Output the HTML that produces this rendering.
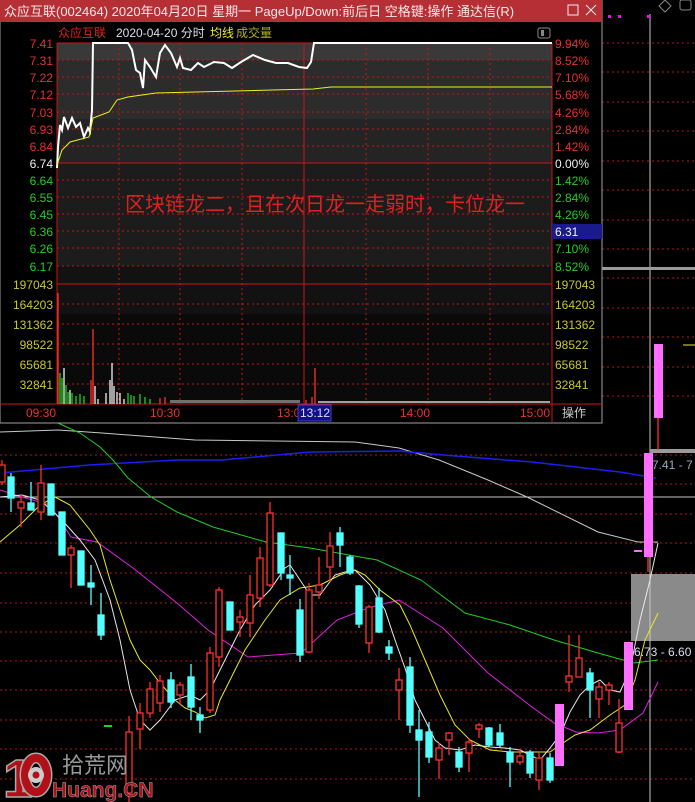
<!DOCTYPE html>
<html><head><meta charset="utf-8"><style>
html,body{margin:0;padding:0;background:#000;width:695px;height:802px;overflow:hidden}
svg{display:block}
text{font-family:"Liberation Sans","Noto Sans CJK SC",sans-serif}
</style></head><body>
<svg width="695" height="802" viewBox="0 0 695 802" xmlns="http://www.w3.org/2000/svg">
<rect width="695" height="802" fill="#000"/>
<g stroke="#b01818" stroke-width="1" stroke-dasharray="2,3">
<line x1="0" x2="695" y1="484" y2="484"/><line x1="0" x2="695" y1="514" y2="514"/><line x1="0" x2="695" y1="543" y2="543"/><line x1="0" x2="695" y1="573" y2="573"/><line x1="0" x2="695" y1="603" y2="603"/><line x1="0" x2="695" y1="632" y2="632"/><line x1="0" x2="695" y1="661" y2="661"/><line x1="0" x2="695" y1="690" y2="690"/><line x1="0" x2="695" y1="720" y2="720"/><line x1="0" x2="695" y1="749" y2="749"/><line x1="0" x2="695" y1="779" y2="779"/><line x1="0" x2="695" y1="455" y2="455"/>
<line x1="602" x2="695" y1="43" y2="43"/><line x1="602" x2="695" y1="72" y2="72"/><line x1="602" x2="695" y1="102" y2="102"/><line x1="602" x2="695" y1="131" y2="131"/><line x1="602" x2="695" y1="161" y2="161"/><line x1="602" x2="695" y1="190" y2="190"/><line x1="602" x2="695" y1="220" y2="220"/><line x1="602" x2="695" y1="249" y2="249"/><line x1="602" x2="695" y1="278" y2="278"/><line x1="602" x2="695" y1="308" y2="308"/><line x1="602" x2="695" y1="337" y2="337"/><line x1="602" x2="695" y1="367" y2="367"/><line x1="602" x2="695" y1="396" y2="396"/>
</g>
<line x1="0" x2="695" y1="497" y2="497" stroke="#c8c8c8"/>
<rect x="631" y="574" width="64" height="67" fill="#8a8a8a"/>
<line x1="650" x2="650" y1="14" y2="802" stroke="#c8c8c8"/>
<rect x="602" y="267" width="93" height="3" fill="#9a9a9a"/>
<rect x="650" y="449" width="45" height="4" fill="#9a9a9a"/>
<polyline fill="none" stroke="#c8c8c8" points="0,432 58,430 102,433 195,440 355,442 399,448 439,460 488,480 527,497 598,532 638,542 658,542"/>
<polyline fill="none" stroke="#1e1ef0" stroke-width="1.5" points="0,473 89,465 177,460 222,460 310,452 399,451 443,455 532,462 620,472 656,478"/>
<polyline fill="none" stroke="#20d020" points="58,423 80,433 100,447 113,460 128,478 151,497 177,512 213,527 266,542 310,548 377,560 421,580 465,613 510,625 554,640 598,653 634,663 658,660"/>
<polyline fill="none" stroke="#e020e0" points="0,490 22,497 50,505 71,537 97,542 133,568 177,603 208,630 248,657 301,653 337,620 368,608 399,600 443,628 488,673 532,707 554,723 576,732 598,733 620,730 643,713 658,682"/>
<polyline fill="none" stroke="#e8e820" points="0,542 20,525 40,505 55,497 70,505 90,530 100,545 110,580 120,610 130,640 140,660 150,670 160,683 175,700 185,708 195,712 205,718 215,715 220,700 230,680 245,650 265,620 280,600 300,588 320,585 340,575 355,570 365,575 380,590 400,605 410,625 425,660 440,695 455,725 470,740 490,750 510,752 535,752 550,752 560,745 575,735 590,730 610,715 625,705 635,680 645,640 658,613"/>
<polyline fill="none" stroke="#e8e8e8" points="0,497 22,495 40,500 60,518 80,540 95,560 110,600 120,640 130,690 140,720 150,730 160,720 175,700 190,695 200,700 210,690 220,670 230,650 240,630 255,605 270,590 285,568 290,565 300,580 310,595 320,595 335,575 345,572 355,570 370,585 385,610 395,640 405,668 415,700 425,720 435,740 445,748 460,750 475,745 490,747 505,748 520,750 530,755 540,760 550,748 560,735 570,712 580,695 590,685 600,680 610,690 620,692 630,670 640,620 650,580 658,543"/>
<g stroke-width="1.3">
<g stroke="#ff3030" fill="#000">
<line x1="2" x2="2" y1="460" y2="485"/><rect x="-1" y="465" width="6" height="17"/>
<line x1="21" x2="21" y1="495" y2="527"/><rect x="18" y="502" width="6" height="6"/>
<line x1="41" x2="41" y1="465" y2="520"/><rect x="38" y="483" width="6" height="29"/>
<line x1="71" x2="71" y1="545" y2="588"/><rect x="68" y="548" width="6" height="7"/>
<line x1="129" x2="129" y1="716" y2="802"/><rect x="126" y="732" width="6" height="61"/>
<line x1="140" x2="140" y1="703" y2="749"/><rect x="137" y="713" width="6" height="16"/>
<line x1="150" x2="150" y1="682" y2="718"/><rect x="147" y="689" width="6" height="24"/>
<line x1="160" x2="160" y1="675" y2="712"/><rect x="157" y="681" width="6" height="22"/>
<line x1="180" x2="180" y1="682" y2="705"/><rect x="177" y="685" width="6" height="10"/>
<line x1="210" x2="210" y1="647" y2="713"/><rect x="207" y="653" width="6" height="57"/>
<line x1="219" x2="219" y1="587" y2="667"/><rect x="216" y="590" width="6" height="67"/>
<line x1="240" x2="240" y1="610" y2="637"/><rect x="237" y="617" width="6" height="5"/>
<line x1="250" x2="250" y1="575" y2="637"/><rect x="247" y="595" width="6" height="28"/>
<line x1="260" x2="260" y1="547" y2="607"/><rect x="257" y="558" width="6" height="40"/>
<line x1="270" x2="270" y1="502" y2="587"/><rect x="267" y="513" width="6" height="72"/>
<line x1="309" x2="309" y1="583" y2="653"/><rect x="306" y="590" width="6" height="62"/>
<line x1="319" x2="319" y1="557" y2="599"/><rect x="316" y="585" width="6" height="7"/>
<line x1="330" x2="330" y1="532" y2="582"/><rect x="327" y="546" width="6" height="21"/>
<line x1="369" x2="369" y1="605" y2="653"/><rect x="366" y="607" width="6" height="36"/>
<line x1="399" x2="399" y1="668" y2="720"/><rect x="396" y="680" width="6" height="10"/>
<line x1="439" x2="439" y1="743" y2="779"/><rect x="436" y="748" width="6" height="12"/>
<line x1="449" x2="449" y1="732" y2="755"/><rect x="446" y="733" width="6" height="7"/>
<line x1="469" x2="469" y1="738" y2="772"/><rect x="466" y="742" width="6" height="11"/>
<line x1="479" x2="479" y1="723" y2="738"/><rect x="476" y="725" width="6" height="4"/>
<line x1="520" x2="520" y1="749" y2="765"/><rect x="517" y="756" width="6" height="6"/>
<line x1="539" x2="539" y1="753" y2="790"/><rect x="536" y="758" width="6" height="22"/>
<line x1="569" x2="569" y1="635" y2="692"/><rect x="566" y="676" width="6" height="6"/>
<line x1="579" x2="579" y1="635" y2="677"/><rect x="576" y="658" width="6" height="19"/>
<line x1="599" x2="599" y1="682" y2="718"/><rect x="596" y="687" width="6" height="12"/>
<line x1="609" x2="609" y1="682" y2="705"/><rect x="606" y="685" width="6" height="5"/>
<line x1="619" x2="619" y1="699" y2="753"/><rect x="616" y="723" width="6" height="29"/>
<line x1="658" x2="658" y1="418" y2="450"/>
<line x1="648" x2="648" y1="557" y2="572"/>
</g>
<g stroke="#54ffff" fill="#54ffff">
<line x1="11" x2="11" y1="473" y2="512"/><rect x="8" y="477" width="6" height="21"/>
<line x1="31" x2="31" y1="482" y2="510"/><rect x="28" y="503" width="6" height="7"/>
<line x1="51" x2="51" y1="484" y2="515"/><rect x="48" y="484" width="6" height="31"/>
<line x1="62" x2="62" y1="512" y2="555"/><rect x="59" y="512" width="6" height="43"/>
<line x1="81" x2="81" y1="551" y2="585"/><rect x="78" y="551" width="6" height="34"/>
<line x1="91" x2="91" y1="565" y2="605"/><rect x="88" y="583" width="6" height="4"/>
<line x1="101" x2="101" y1="593" y2="640"/><rect x="98" y="615" width="6" height="20"/>
<line x1="171" x2="171" y1="672" y2="708"/><rect x="168" y="680" width="6" height="22"/>
<line x1="191" x2="191" y1="664" y2="720"/><rect x="188" y="677" width="6" height="30"/>
<line x1="200" x2="200" y1="707" y2="733"/><rect x="197" y="715" width="6" height="5"/>
<line x1="230" x2="230" y1="602" y2="630"/><rect x="227" y="602" width="6" height="28"/>
<line x1="281" x2="281" y1="533" y2="580"/><rect x="278" y="533" width="6" height="40"/>
<line x1="290" x2="290" y1="555" y2="595"/><rect x="287" y="575" width="6" height="3"/>
<line x1="300" x2="300" y1="599" y2="662"/><rect x="297" y="610" width="6" height="45"/>
<line x1="340" x2="340" y1="527" y2="567"/><rect x="337" y="533" width="6" height="12"/>
<line x1="350" x2="350" y1="555" y2="575"/><rect x="347" y="557" width="6" height="16"/>
<line x1="359" x2="359" y1="585" y2="628"/><rect x="356" y="586" width="6" height="38"/>
<line x1="379" x2="379" y1="588" y2="633"/><rect x="376" y="598" width="6" height="34"/>
<line x1="389" x2="389" y1="640" y2="660"/><rect x="386" y="647" width="6" height="6"/>
<line x1="410" x2="410" y1="657" y2="733"/><rect x="407" y="667" width="6" height="58"/>
<line x1="419" x2="419" y1="710" y2="797"/><rect x="416" y="730" width="6" height="10"/>
<line x1="429" x2="429" y1="722" y2="763"/><rect x="426" y="732" width="6" height="25"/>
<line x1="459" x2="459" y1="747" y2="772"/><rect x="456" y="752" width="6" height="15"/>
<line x1="489" x2="489" y1="727" y2="747"/><rect x="486" y="728" width="6" height="17"/>
<line x1="500" x2="500" y1="724" y2="747"/><rect x="497" y="733" width="6" height="12"/>
<line x1="510" x2="510" y1="747" y2="787"/><rect x="507" y="752" width="6" height="10"/>
<line x1="530" x2="530" y1="750" y2="778"/><rect x="527" y="752" width="6" height="21"/>
<line x1="550" x2="550" y1="753" y2="783"/><rect x="547" y="758" width="6" height="22"/>
<line x1="590" x2="590" y1="668" y2="718"/><rect x="587" y="673" width="6" height="17"/>
</g>
<g fill="#ff6eff" stroke="none">
<rect x="555" y="704" width="9" height="62"/>
<rect x="624" y="642" width="9" height="68"/>
<rect x="644" y="453" width="9" height="104"/>
<rect x="654" y="344" width="9" height="74"/>
<rect x="634" y="550" width="8" height="2"/>
</g>
</g>
<line x1="104" x2="112" y1="726" y2="726" stroke="#20d020" stroke-width="2"/>
<line x1="683" x2="695" y1="345" y2="345" stroke="#e8e820"/>
<g fill="#ff00ff"><rect x="608" y="15" width="3" height="3"/><rect x="618" y="15" width="3" height="3"/><rect x="647" y="15" width="3" height="3"/></g>
<path d="M665 0 l6 6 -6 6 -6 -6z" fill="none" stroke="#888"/>
<rect x="680" y="0" width="11" height="10" rx="2" fill="none" stroke="#888"/>
<text x="652" y="469" font-size="12" fill="#9ab">7.41 - 7</text>
<text x="634" y="656" font-size="12" fill="#dde">6.73 - 6.60</text>
<!-- logo -->
<text x="3" y="797" font-size="54" font-weight="bold" fill="#b01018" stroke="#aaa" stroke-width="1.5">1</text>
<ellipse cx="36" cy="775" rx="11" ry="17" fill="none" stroke="#aaa" stroke-width="11"/>
<ellipse cx="36" cy="775" rx="11" ry="17" fill="none" stroke="#b01018" stroke-width="8"/>
<circle cx="36" cy="775" r="8" fill="#ccc"/><circle cx="36" cy="775" r="3.5" fill="#b01018"/>
<text x="62" y="773" font-size="22" fill="#999" font-family="'Noto Sans CJK SC',sans-serif">拾荒网</text>
<text x="52" y="797" font-size="21" font-weight="bold" fill="#b01018" stroke="#aaa" stroke-width="0.5">Huang.CN</text>
<!-- popup window -->
<rect x="0" y="0" width="602" height="423" fill="#000" stroke="#a0a0a0"/>
<rect x="0" y="0" width="602" height="22" fill="#b62f35"/>
<text x="4" y="16" font-size="13" fill="#f4e8e8">众应互联(002464) 2020年04月20日 星期一 PageUp/Down:前后日 空格键:操作 通达信(R)</text>
<rect x="568" y="5" width="10" height="10" fill="none" stroke="#eee"/>
<path d="M586 5 l10 10 M596 5 l-10 10" stroke="#eee"/>
<text x="58" y="37" font-size="12" fill="#e02020">众应互联</text>
<text x="116" y="37" font-size="12" fill="#dde">2020-04-20 分时</text>
<text x="210" y="37" font-size="12" fill="#e8e820">均线</text>
<text x="236" y="37" font-size="12" fill="#b0b020">成交量</text>
<rect x="538" y="28" width="12" height="10" rx="2" fill="none" stroke="#888"/><rect x="541" y="30" width="3" height="6" fill="#888"/>
<rect x="57" y="43" width="495" height="17" fill="#393939"/>
<rect x="57" y="60" width="495" height="59" fill="#2c2c2c"/>
<rect x="57" y="119" width="495" height="44" fill="#242424"/>
<rect x="57" y="163" width="495" height="103" fill="#1c1c1c"/>
<rect x="57" y="266" width="495" height="48" fill="#121212"/>
<rect x="57" y="314" width="495" height="90" fill="#0a0a0a"/>
<g stroke="#c01818" stroke-dasharray="2,3">
<line x1="57" x2="552" y1="60" y2="60"/><line x1="57" x2="552" y1="77" y2="77"/><line x1="57" x2="552" y1="94" y2="94"/><line x1="57" x2="552" y1="112" y2="112"/><line x1="57" x2="552" y1="129" y2="129"/><line x1="57" x2="552" y1="146" y2="146"/>
<line x1="57" x2="552" y1="180" y2="180"/><line x1="57" x2="552" y1="197" y2="197"/><line x1="57" x2="552" y1="214" y2="214"/><line x1="57" x2="552" y1="231" y2="231"/><line x1="57" x2="552" y1="248" y2="248"/><line x1="57" x2="552" y1="266" y2="266"/>
<line x1="57" x2="552" y1="304" y2="304"/><line x1="57" x2="552" y1="324" y2="324"/><line x1="57" x2="552" y1="344" y2="344"/><line x1="57" x2="552" y1="364" y2="364"/><line x1="57" x2="552" y1="384" y2="384"/>
<line x1="119" x2="119" y1="43" y2="404"/><line x1="180" x2="180" y1="43" y2="404"/><line x1="242" x2="242" y1="43" y2="404"/><line x1="366" x2="366" y1="43" y2="404"/><line x1="428" x2="428" y1="43" y2="404"/><line x1="490" x2="490" y1="43" y2="404"/>
</g>
<g stroke="#c81818">
<line x1="57" x2="552" y1="43" y2="43"/><line x1="57" x2="552" y1="163" y2="163"/><line x1="57" x2="552" y1="284" y2="284"/><line x1="0" x2="602" y1="404" y2="404"/>
<line x1="57" x2="57" y1="43" y2="404"/><line x1="304" x2="304" y1="43" y2="404"/><line x1="552" x2="552" y1="43" y2="423"/>
</g>
<polyline fill="none" stroke="#fff" stroke-width="2" points="57,168 58,147 60,125 62,130 64,117 68,128 72,118 76,127 80,123 84,137 88,128 90,132 92,110 93,43 128,43 132,50 136,70 140,73 143,88 145,60 150,67 156,77 160,53 165,45 171,53 177,67 180,58 183,68 191,70 198,63 204,67 214,62 224,63 232,68 241,62 253,55 265,60 276,63 288,63 299,67 307,68 311,62 314,43 552,43"/>
<polyline fill="none" stroke="#f0f020" points="57,165 62,150 70,142 89,137 93,118 109,112 117,100 128,97 156,93 195,92 272,90 313,89 331,87 552,87"/>
<g stroke-width="1.3">
<g stroke="#ff3030"><line x1="58" x2="58" y1="404" y2="293"/><line x1="93" x2="93" y1="404" y2="329"/><line x1="91" x2="91" y1="404" y2="380"/><line x1="315" x2="315" y1="404" y2="368"/><line x1="160" x2="160" y1="404" y2="398"/><line x1="165" x2="165" y1="404" y2="397"/><line x1="312" x2="312" y1="404" y2="397"/><line x1="306" x2="306" y1="404" y2="400"/></g>
<g stroke="#20d020"><line x1="60" x2="60" y1="404" y2="373"/><line x1="62" x2="62" y1="404" y2="378"/><line x1="66" x2="66" y1="404" y2="385"/><line x1="68" x2="68" y1="404" y2="392"/><line x1="72" x2="72" y1="404" y2="393"/><line x1="76" x2="76" y1="404" y2="396"/><line x1="80" x2="80" y1="404" y2="394"/><line x1="84" x2="84" y1="404" y2="396"/><line x1="128" x2="128" y1="404" y2="393"/><line x1="131" x2="131" y1="404" y2="395"/><line x1="134" x2="134" y1="404" y2="396"/><line x1="140" x2="140" y1="404" y2="394"/><line x1="145" x2="145" y1="404" y2="397"/><line x1="150" x2="150" y1="404" y2="399"/></g>
<g stroke="#f0f0f0"><line x1="64" x2="64" y1="404" y2="368"/><line x1="70" x2="70" y1="404" y2="390"/><line x1="95" x2="95" y1="404" y2="386"/><line x1="98" x2="98" y1="404" y2="399"/><line x1="106" x2="106" y1="404" y2="393"/><line x1="110" x2="110" y1="404" y2="380"/><line x1="112" x2="112" y1="404" y2="363"/><line x1="114" x2="114" y1="404" y2="386"/><line x1="117" x2="117" y1="404" y2="392"/><line x1="120" x2="120" y1="404" y2="393"/><line x1="124" x2="124" y1="404" y2="399"/></g>
</g>
<rect x="170" y="400" width="130" height="3" fill="#707070"/>
<rect x="318" y="401" width="232" height="2" fill="#a0a0a0"/>
<g font-size="12" text-anchor="end">
<text x="53" y="48" fill="#e83030">7.41</text><text x="53" y="65" fill="#e83030">7.31</text><text x="53" y="82" fill="#e83030">7.22</text><text x="53" y="99" fill="#e83030">7.12</text><text x="53" y="117" fill="#e83030">7.03</text><text x="53" y="134" fill="#e83030">6.93</text><text x="53" y="151" fill="#e83030">6.84</text><text x="53" y="168" fill="#f0f0f0">6.74</text>
<text x="53" y="185" fill="#20d020">6.64</text><text x="53" y="202" fill="#20d020">6.55</text><text x="53" y="219" fill="#20d020">6.45</text><text x="53" y="236" fill="#20d020">6.36</text><text x="53" y="253" fill="#20d020">6.26</text><text x="53" y="271" fill="#20d020">6.17</text>
<text x="53" y="289" fill="#c8c830">197043</text><text x="53" y="309" fill="#c8c830">164203</text><text x="53" y="329" fill="#c8c830">131362</text><text x="53" y="349" fill="#c8c830">98522</text><text x="53" y="369" fill="#c8c830">65681</text><text x="53" y="389" fill="#c8c830">32841</text>
</g>
<g font-size="12">
<text x="555" y="48" fill="#e83030">9.94%</text><text x="555" y="65" fill="#e83030">8.52%</text><text x="555" y="82" fill="#e83030">7.10%</text><text x="555" y="99" fill="#e83030">5.68%</text><text x="555" y="117" fill="#e83030">4.26%</text><text x="555" y="134" fill="#e83030">2.84%</text><text x="555" y="151" fill="#e83030">1.42%</text><text x="555" y="168" fill="#f0f0f0">0.00%</text>
<text x="555" y="185" fill="#20d020">1.42%</text><text x="555" y="202" fill="#20d020">2.84%</text><text x="555" y="219" fill="#20d020">4.26%</text>
<rect x="552" y="224" width="50" height="15" fill="#1a1a8c"/><text x="555" y="236" fill="#f0f0f0">6.31</text>
<text x="555" y="253" fill="#20d020">7.10%</text><text x="555" y="271" fill="#20d020">8.52%</text>
<text x="555" y="289" fill="#c8c830">197043</text><text x="555" y="309" fill="#c8c830">164203</text><text x="555" y="329" fill="#c8c830">131362</text><text x="555" y="349" fill="#c8c830">98522</text><text x="555" y="369" fill="#c8c830">65681</text><text x="555" y="389" fill="#c8c830">32841</text>
<text x="26" y="417" fill="#e83030">09:30</text><text x="150" y="417" fill="#e83030">10:30</text><text x="277" y="417" fill="#e83030">13:0</text>
<rect x="298" y="405" width="33" height="16" fill="#10108a" stroke="#4040c0"/><text x="300" y="417" fill="#dde">13:12</text>
<text x="400" y="417" fill="#e83030">14:00</text><text x="520" y="417" fill="#e83030">15:00</text>
<text x="562" y="417" fill="#ccc">操作</text>
</g>
<text x="125" y="211" font-size="20" fill="#e02020" textLength="400" lengthAdjust="spacingAndGlyphs">区块链龙二，且在次日龙一走弱时，卡位龙一</text>
</svg>
</body></html>
